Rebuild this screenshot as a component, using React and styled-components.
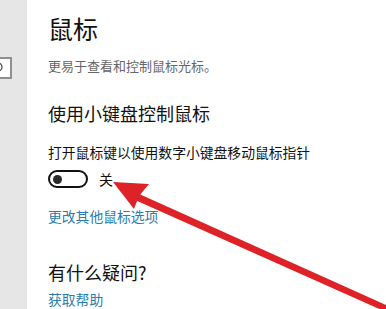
import React from "react";
import styled, { createGlobalStyle } from "styled-components";

const Global = createGlobalStyle`
  html, body { margin: 0; padding: 0; background: #fff; }
  body { font-family: "Noto Sans CJK SC", "Noto Sans", sans-serif; }
  #root { width: 386px; height: 309px; overflow: hidden; }
`;

const Page = styled.div`
  position: relative;
  width: 386px;
  height: 309px;
  display: flex;
  overflow: hidden;
  background: #fff;
`;

const Sidebar = styled.aside`
  width: 27px;
  flex: none;
  background: #e6e6e6;
  overflow: hidden;
  padding-top: 57px;
  box-sizing: border-box;
`;

const SearchBox = styled.div`
  margin-left: -190px;
  width: 202px;
  height: 22px;
  box-sizing: border-box;
  border: 2px solid #8f8f8f;
  background: #fff;
  display: flex;
  justify-content: flex-end;
  align-items: center;
  padding-right: 6px;
`;

const Main = styled.main`
  flex: 1;
  padding: 11px 0 0 21px;
  color: #111;
`;

const Title = styled.h1`
  margin: 0;
  font-size: 25px;
  line-height: 34px;
  font-weight: 400;
`;

const Subtitle = styled.p`
  margin: 11px 0 0;
  font-size: 13px;
  line-height: 20px;
  color: #666;
`;

const SectionHeading = styled.h2`
  margin: ${(p) => p.$gap}px 0 0;
  font-size: 18px;
  line-height: 26px;
  font-weight: 400;
`;

const Body = styled.p`
  margin: 16px 0 0;
  font-size: 13.8px;
  line-height: 20px;
`;

const ToggleRow = styled.div`
  margin-top: 8px;
  display: flex;
  align-items: center;
  height: 18px;
`;

const Toggle = styled.div`
  width: 40px;
  height: 18px;
  box-sizing: border-box;
  border: 2px solid #111;
  border-radius: 9px;
  display: flex;
  align-items: center;
  padding-left: 3px;
`;

const Knob = styled.span`
  width: 9px;
  height: 9px;
  border-radius: 50%;
  background: #2a2a2a;
`;

const ToggleLabel = styled.span`
  margin-left: 11px;
  font-size: 14px;
  line-height: 18px;
`;

const Link = styled.a`
  display: block;
  margin-top: ${(p) => p.$gap}px;
  font-size: 13.8px;
  line-height: 20px;
  color: #2c7bab;
  text-decoration: none;
`;

const Overlay = styled.svg`
  position: absolute;
  left: 0;
  top: 0;
  pointer-events: none;
`;

export default function App() {
  return (
    <>
      <Global />
      <Page>
        <Sidebar>
          <SearchBox>
            <svg width="8" height="12" viewBox="0 0 8 12">
              <circle cx="2" cy="5" r="4" fill="none" stroke="#444" strokeWidth="1.2" />
            </svg>
          </SearchBox>
        </Sidebar>
        <Main>
          <Title>鼠标</Title>
          <Subtitle>更易于查看和控制鼠标光标。</Subtitle>
          <SectionHeading $gap={24}>使用小键盘控制鼠标</SectionHeading>
          <Body>打开鼠标键以使用数字小键盘移动鼠标指针</Body>
          <ToggleRow>
            <Toggle>
              <Knob />
            </Toggle>
            <ToggleLabel>关</ToggleLabel>
          </ToggleRow>
          <Link $gap={18}>更改其他鼠标选项</Link>
          <SectionHeading $gap={33}>有什么疑问?</SectionHeading>
          <Link $gap={4}>获取帮助</Link>
        </Main>
        <Overlay width="386" height="309" viewBox="0 0 386 309">
          <polygon points="137,193 395,309 395,316 135,200" fill="#dd2228" />
          <polygon points="113,182 149,184 139,196 134,209" fill="#dd2228" />
        </Overlay>
      </Page>
    </>
  );
}
